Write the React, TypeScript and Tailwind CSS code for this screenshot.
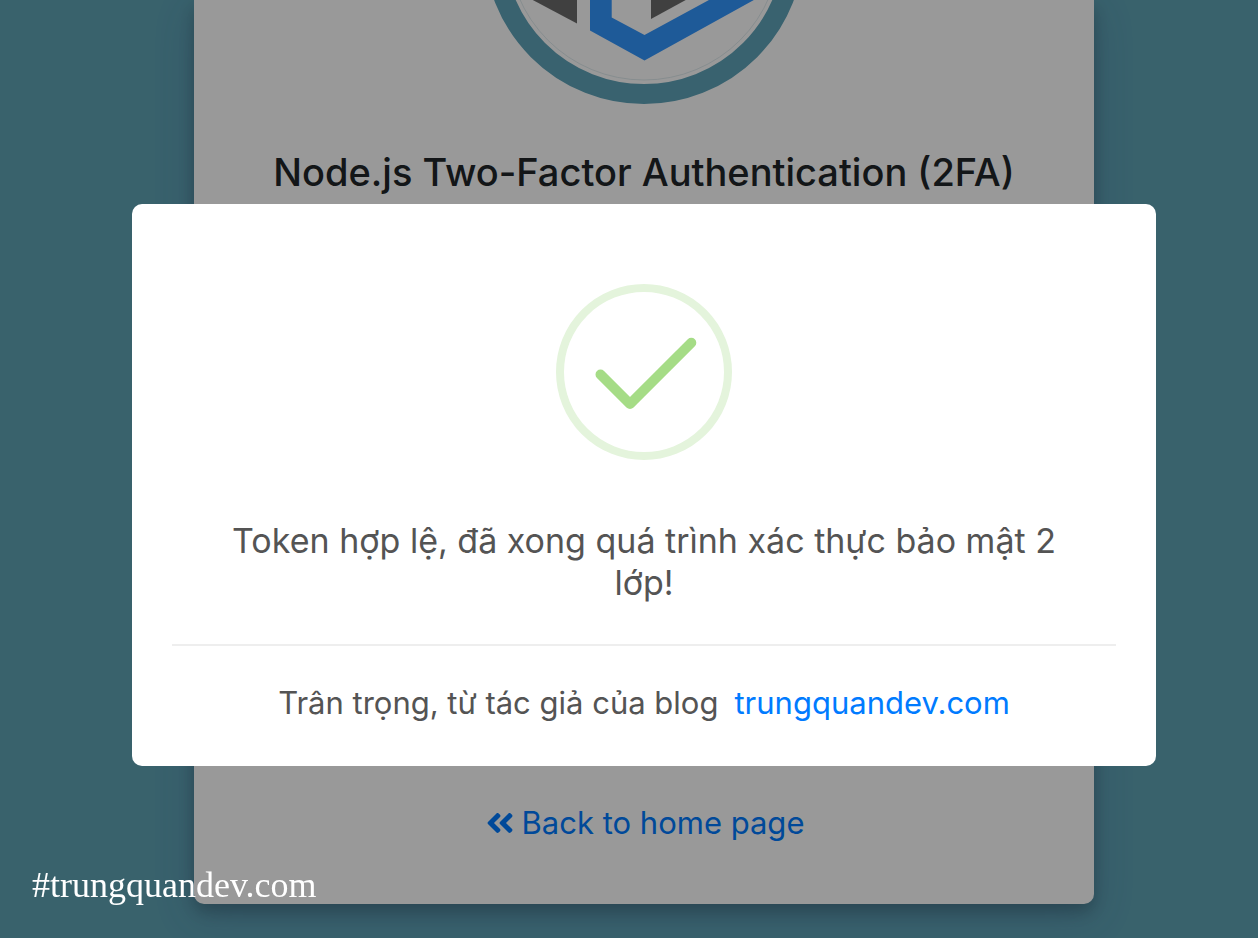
import React from "react";
import { FaAngleDoubleLeft } from "react-icons/fa";

function Avatar() {
  return (
    <div className="flex h-[104px] items-end justify-center self-stretch overflow-hidden">
      <svg
        viewBox="0 0 320 320"
        className="size-80 shrink-0"
        role="img"
        aria-label="Logo"
      >
        <circle cx="160" cy="160" r="150" fill="#ffffff" stroke="#5fa3b9" strokeWidth="20" />
        <circle cx="160" cy="160" r="136" fill="none" stroke="#d3e2e6" strokeWidth="0.7" />
        <path d="M13 197 L93 239.5 L93 150 L13 190 Z" fill="#6c6c6c" />
        <path d="M167 150 L167 235 L231 200 L231 150 Z" fill="#6c6c6c" />
        <path
          d="M106 150 L106 246.5 L160.5 276.5 L306 196 L306 172 L160.5 251 L127.7 233.5 L127.7 150 Z"
          fill="#3396fd"
        />
      </svg>
    </div>
  );
}

function SuccessIcon() {
  return (
    <svg viewBox="0 0 176 176" className="size-44" fill="none" aria-hidden="true">
      <circle cx="88" cy="88" r="84" stroke="#e4f4dc" strokeWidth="8" />
      <path
        d="M44.5 90.5 L74 120 L135.3 58.7"
        stroke="#a5dc86"
        strokeWidth="10"
        strokeLinecap="round"
        strokeLinejoin="round"
      />
    </svg>
  );
}

function SuccessDialog() {
  return (
    <div className="fixed inset-0 flex items-center justify-center bg-black/40 pt-8 pl-[30px]">
      <section
        role="dialog"
        aria-modal="true"
        aria-labelledby="dialog-title"
        className="flex w-full max-w-[1024px] flex-col items-center rounded-[10px] bg-white p-10 text-[#545454]"
      >
        <div className="pt-10 pb-[60px]">
          <SuccessIcon />
        </div>
        <h2
          id="dialog-title"
          className="max-w-[860px] text-center text-[34px] leading-[42px]"
        >
          Token hợp lệ, đã xong quá trình xác thực bảo mật 2 lớp!
        </h2>
        <footer className="mt-10 flex justify-center gap-4 self-stretch border-t-2 border-[#eeeeee] pt-[34px] text-[31px] leading-[46px]">
          <span>Trân trọng, từ tác giả của blog</span>
          <a href="#blog" className="text-[#007bff]">
            trungquandev.com
          </a>
        </footer>
      </section>
    </div>
  );
}

export default function App() {
  return (
    <div className="flex min-h-screen flex-col items-center bg-[#5fa3b5] pb-[34px] pl-[30px] font-['Inter',sans-serif]">
      <main className="flex w-full max-w-[900px] grow flex-col items-center rounded-b-[10px] bg-white pb-[58px] shadow-[0_8px_16px_rgba(0,0,0,0.2),0_12px_40px_rgba(50,60,130,0.2)]">
        <Avatar />
        <h1 className="mt-11 text-[38px] leading-[48px] font-medium text-[#212529]">
          Node.js Two-Factor Authentication (2FA)
        </h1>
        <a
          href="#home"
          className="mt-auto flex items-center gap-1.5 text-[31px] leading-[46px] text-[#007bff]"
        >
          <FaAngleDoubleLeft className="text-[32px]" aria-hidden="true" />
          Back to home page
        </a>
      </main>
      <SuccessDialog />
      <p className="fixed bottom-8 left-8 font-['Liberation_Serif',serif] text-[36px] leading-[42px] text-white">
        #trungquandev.com
      </p>
    </div>
  );
}
